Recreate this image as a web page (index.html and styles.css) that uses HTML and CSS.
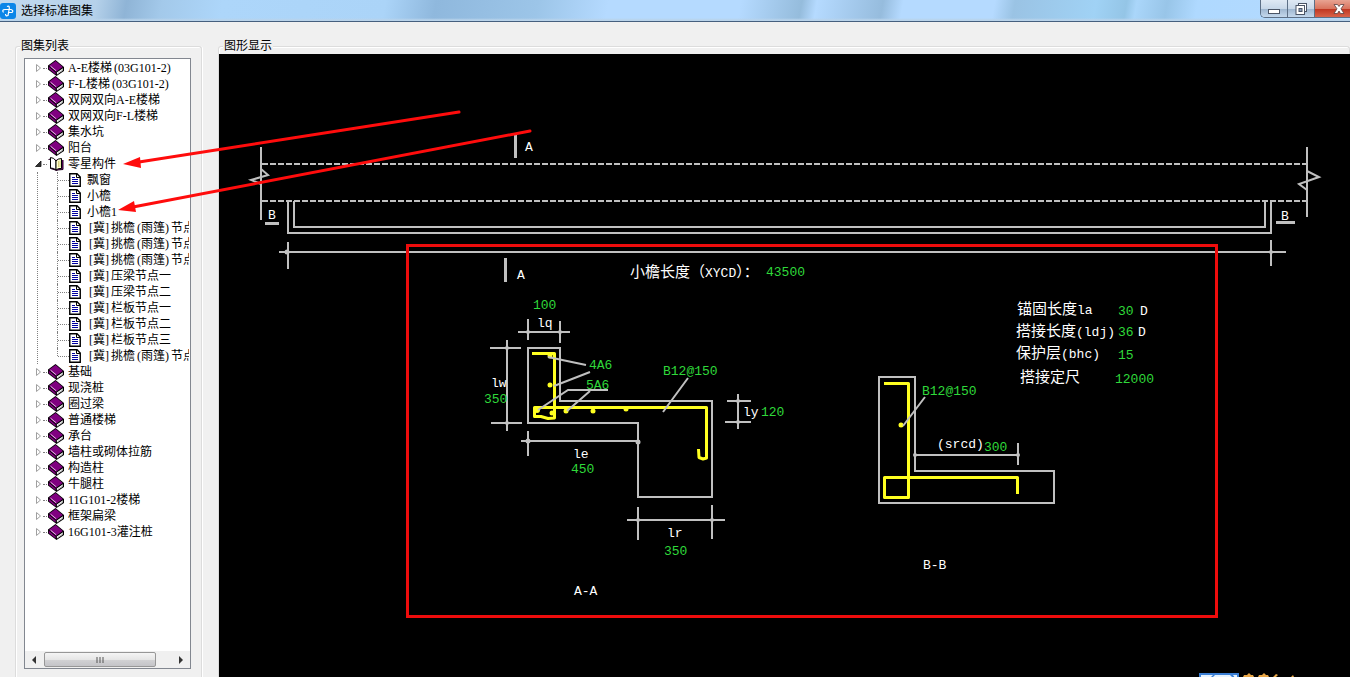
FILE: index.html
```html
<!DOCTYPE html>
<html lang="zh-CN">
<head>
<meta charset="utf-8">
<title>选择标准图集</title>
<link rel="stylesheet" href="styles.css">
</head>
<body>
<svg class="defs" aria-hidden="true">
  <symbol id="book" viewBox="0 0 16 16">
    <path d="M0 5.500 7.500 0 16 7 16 11 8.500 16 0 9.500z" fill="#000"/>
    <path d="M1 5.800 7.600 1 14.800 7 8 11.800z" fill="#800080"/>
    <path d="M.8 6.800 7.600 12.500 7.600 14.600 .8 9z" fill="#800080"/>
    <path d="M8.800 12.600 15 8.300 14.500 10.800 9 14.600z" fill="#fff"/>
    <path d="M2.600 6.200 8.200 10.800" stroke="#e6b8e6" fill="none"/>
    <path d="M9.500 13.600 14.500 10" stroke="#999" stroke-width=".6" fill="none"/>
  </symbol>
  <symbol id="open" viewBox="0 0 16 16">
    <path d="M.5 3.500 2.500 3 2.500 12.500 7.500 14 8.500 15 9.500 14 15 13.500 15 4" fill="#800080" stroke="#1a001a"/>
    <path d="M2.500 1.500Q6 1.500 8 5L8 14Q6 12 2.500 12z" fill="#fff" stroke="#000"/>
    <path d="M8 5Q9.500 2.500 13.500 2.500L13.500 12.500Q10 12 8 14z" fill="#ffffd0" stroke="#000"/>
    <path d="M10.500 5V11M12 4.500V11" stroke="#d8d080"/>
  </symbol>
  <symbol id="doc" viewBox="0 0 12 14">
    <path d="M.75 .75H8L11.250 4V13.250H.75z" fill="#fff" stroke="#000" stroke-width="1.400"/>
    <path d="M7.500 1V4.500H11" fill="none" stroke="#000"/>
    <path d="M3 4.500H6M3 6.500H9M3 8.500H9M3 10.500H9" stroke="#0000a0"/>
  </symbol>
  <symbol id="shut" viewBox="0 0 8 10"><path d="M1.500 1.500 5.500 5 1.500 8.500z" fill="#fff" stroke="#a0a0a0"/></symbol>
  <symbol id="expanded" viewBox="0 0 8 10"><path d="M6 2V7.500H.5z" fill="#333" stroke="#111" stroke-width=".8"/></symbol>
</svg>

<div class="window">
  <header class="titlebar">
    <svg class="app-icon" viewBox="0 0 16 16"><rect width="16" height="16" rx="3" fill="#0b86e8"/><path d="M7 3.500Q9.500 2 9.300 5.500L8 12.500Q5.500 13.500 5.500 11M3.500 9.500Q1.500 6.500 5 6.500H11Q14 7.500 12 9.500H9" fill="none" stroke="#fff" stroke-width="1.200"/></svg>
    <h1 class="title">选择标准图集</h1>
    <div class="controls">
      <button class="control" aria-label="最小化"><svg viewBox="0 0 14 14"><rect x="1.500" y="7.500" width="11" height="4" fill="#fff" stroke="#4b5566"/></svg></button>
      <button class="control" aria-label="还原"><svg viewBox="0 0 14 14"><rect x="4.500" y="1.500" width="8" height="8" fill="#fff" stroke="#4b5566"/><rect x="2" y="3.500" width="8.500" height="9" fill="#fff" stroke="#4b5566"/><rect x="5" y="6.500" width="3" height="3" fill="#8ba0bb" stroke="#4b5566"/></svg></button>
      <button class="control close" aria-label="关闭"><svg viewBox="0 0 14 14"><path d="M2 2.500H5.500L7 4.500 8.500 2.500H12L9 6.800 12 11.500H8.500L7 9 5.500 11.500H2L5 6.800z" fill="#fff" stroke="#5b4040" stroke-width=".8"/></svg></button>
    </div>
  </header>

  <main class="content">
    <section class="group list-group">
      <h2 class="legend">图集列表</h2>
      <div class="tree-box">
        <ul class="tree">
          <li class="row"><button class="toggle" aria-label="展开"><svg><use href="#shut"/></svg></button><svg class="icon"><use href="#book"/></svg>A-E楼梯<span class="half right">(</span>03G101-2<span class="half">)</span></li>
          <li class="row"><button class="toggle" aria-label="展开"><svg><use href="#shut"/></svg></button><svg class="icon"><use href="#book"/></svg>F-L楼梯<span class="half right">(</span>03G101-2<span class="half">)</span></li>
          <li class="row"><button class="toggle" aria-label="展开"><svg><use href="#shut"/></svg></button><svg class="icon"><use href="#book"/></svg>双网双向A-E楼梯</li>
          <li class="row"><button class="toggle" aria-label="展开"><svg><use href="#shut"/></svg></button><svg class="icon"><use href="#book"/></svg>双网双向F-L楼梯</li>
          <li class="row"><button class="toggle" aria-label="展开"><svg><use href="#shut"/></svg></button><svg class="icon"><use href="#book"/></svg>集水坑</li>
          <li class="row"><button class="toggle" aria-label="展开"><svg><use href="#shut"/></svg></button><svg class="icon"><use href="#book"/></svg>阳台</li>
          <li>
            <div class="row"><button class="toggle" aria-label="折叠"><svg><use href="#expanded"/></svg></button><svg class="icon"><use href="#open"/></svg>零星构件</div>
            <ul class="branch">
              <li class="leaf"><svg class="doc"><use href="#doc"/></svg>飘窗</li>
              <li class="leaf"><svg class="doc"><use href="#doc"/></svg>小檐</li>
              <li class="leaf"><svg class="doc"><use href="#doc"/></svg>小檐1</li>
              <li class="leaf"><svg class="doc"><use href="#doc"/></svg><span class="half right">[</span>冀<span class="half">]</span>挑檐<span class="half right">(</span>雨篷<span class="half">)</span>节点</li>
              <li class="leaf"><svg class="doc"><use href="#doc"/></svg><span class="half right">[</span>冀<span class="half">]</span>挑檐<span class="half right">(</span>雨篷<span class="half">)</span>节点</li>
              <li class="leaf"><svg class="doc"><use href="#doc"/></svg><span class="half right">[</span>冀<span class="half">]</span>挑檐<span class="half right">(</span>雨篷<span class="half">)</span>节点</li>
              <li class="leaf"><svg class="doc"><use href="#doc"/></svg><span class="half right">[</span>冀<span class="half">]</span>压梁节点一</li>
              <li class="leaf"><svg class="doc"><use href="#doc"/></svg><span class="half right">[</span>冀<span class="half">]</span>压梁节点二</li>
              <li class="leaf"><svg class="doc"><use href="#doc"/></svg><span class="half right">[</span>冀<span class="half">]</span>栏板节点一</li>
              <li class="leaf"><svg class="doc"><use href="#doc"/></svg><span class="half right">[</span>冀<span class="half">]</span>栏板节点二</li>
              <li class="leaf"><svg class="doc"><use href="#doc"/></svg><span class="half right">[</span>冀<span class="half">]</span>栏板节点三</li>
              <li class="leaf"><svg class="doc"><use href="#doc"/></svg><span class="half right">[</span>冀<span class="half">]</span>挑檐<span class="half right">(</span>雨篷<span class="half">)</span>节点</li>
            </ul>
          </li>
          <li class="row"><button class="toggle" aria-label="展开"><svg><use href="#shut"/></svg></button><svg class="icon"><use href="#book"/></svg>基础</li>
          <li class="row"><button class="toggle" aria-label="展开"><svg><use href="#shut"/></svg></button><svg class="icon"><use href="#book"/></svg>现浇桩</li>
          <li class="row"><button class="toggle" aria-label="展开"><svg><use href="#shut"/></svg></button><svg class="icon"><use href="#book"/></svg>圈过梁</li>
          <li class="row"><button class="toggle" aria-label="展开"><svg><use href="#shut"/></svg></button><svg class="icon"><use href="#book"/></svg>普通楼梯</li>
          <li class="row"><button class="toggle" aria-label="展开"><svg><use href="#shut"/></svg></button><svg class="icon"><use href="#book"/></svg>承台</li>
          <li class="row"><button class="toggle" aria-label="展开"><svg><use href="#shut"/></svg></button><svg class="icon"><use href="#book"/></svg>墙柱或砌体拉筋</li>
          <li class="row"><button class="toggle" aria-label="展开"><svg><use href="#shut"/></svg></button><svg class="icon"><use href="#book"/></svg>构造柱</li>
          <li class="row"><button class="toggle" aria-label="展开"><svg><use href="#shut"/></svg></button><svg class="icon"><use href="#book"/></svg>牛腿柱</li>
          <li class="row"><button class="toggle" aria-label="展开"><svg><use href="#shut"/></svg></button><svg class="icon"><use href="#book"/></svg>11G101-2楼梯</li>
          <li class="row"><button class="toggle" aria-label="展开"><svg><use href="#shut"/></svg></button><svg class="icon"><use href="#book"/></svg>框架扁梁</li>
          <li class="row"><button class="toggle" aria-label="展开"><svg><use href="#shut"/></svg></button><svg class="icon"><use href="#book"/></svg>16G101-3灌注桩</li>
        </ul>
        <div class="scrollbar">
          <button class="scroll-arrow" aria-label="向左滚动"><svg viewBox="0 0 8 8"><path d="M6 0V8L2 4z" fill="#333"/></svg></button>
          <div class="track"><div class="thumb"><svg viewBox="0 0 8 6"><path d="M1 0V6M4 0V6M7 0V6" stroke="#555"/></svg></div></div>
          <button class="scroll-arrow" aria-label="向右滚动"><svg viewBox="0 0 8 8"><path d="M2 0V8L6 4z" fill="#333"/></svg></button>
        </div>
      </div>
    </section>

    <section class="group view-group">
      <h2 class="legend">图形显示</h2>
      <div class="canvas">
        <svg class="drawing" viewBox="219 54 1131 623" preserveAspectRatio="xMinYMin meet" role="img" aria-label="小檐1 节点图">
          <g class="line">
            <path d="M262 164H1306M262 201H1306" stroke-dasharray="6 2"/>
            <path d="M261 147V220M261 169 268 175 251 180 261 184"/>
            <path d="M1307 147V217M1307 171 1319 177 1299 184 1307 190"/>
            <path d="M288 201V233H1271V201M294 201V227H1265V201"/>
            <path d="M279 252H1286M288 242V269M1271 240V266"/>
            <path class="mark" d="M515.500 135V158M505.500 258V282M265 223.500H279M1276 222.500H1295"/>
            <path d="M518 332H570M528 319V340M560 321V343"/>
            <path d="M507 340V431M490 348H521M491 423H522"/>
            <path d="M528 348H560V401H712V497H638V423H528z"/>
            <path d="M521 441H640M528 431V456"/>
            <path d="M627 520H725M638 507V540M712 505V539"/>
            <path d="M738 394V429M727 401H751M725 422H751"/>
            <path d="M879 377H915V471H1054V503H879z"/>
            <path d="M914 455H1019M1018 443V465"/>
          </g>
          <g class="node">
            <circle cx="287" cy="252" r="2.500"/><circle cx="1271" cy="252" r="2"/>
            <circle cx="507" cy="348" r="2"/><circle cx="507" cy="423" r="2"/>
            <circle cx="528" cy="332" r="2"/><circle cx="560" cy="332" r="2"/>
            <circle cx="528" cy="441" r="2.500"/><circle cx="638" cy="442" r="2.500"/>
            <circle cx="638" cy="520" r="2"/><circle cx="712" cy="520" r="2"/>
            <circle cx="738" cy="401" r="2"/><circle cx="738" cy="422" r="2"/>
            <circle cx="915" cy="455" r="2"/><circle cx="1018" cy="455" r="2"/>
          </g>
          <g class="bar">
            <path d="M532 353.500H554.500V418L548 418.500 541 416.500H534.500V407.500H706.500V458L703 459 699 457.500 698.500 449"/>
            <path d="M884 383.500H908.500V497.500H884.500V477.500H1017.500V494"/>
          </g>
          <g class="dot">
            <circle cx="550" cy="356" r="2.500"/><circle cx="550" cy="385" r="2.500"/><circle cx="552" cy="413" r="2.500"/><circle cx="537" cy="410" r="3"/>
            <circle cx="566" cy="411" r="2.500"/><circle cx="593" cy="411" r="2.500"/><circle cx="626" cy="409" r="2.500"/><circle cx="901" cy="425" r="2.500"/>
          </g>
          <path class="leader" d="M548 357 586 365M554 386 590 372M608 390H568L538 410M590 391 567 411M688 378 663 412M925 397 903 426"/>
          <g class="label">
            <text x="525" y="151">A</text><text x="517" y="279">A</text>
            <text x="268" y="219">B</text><text x="1281" y="220">B</text>
            <text x="537" y="327">lq</text><text x="491" y="387">lw</text><text x="573" y="458">le</text>
            <text x="667" y="537">lr</text><text x="743" y="416">ly</text>
            <text x="574" y="595">A-A</text><text x="923" y="569">B-B</text><text x="937" y="448">(srcd)</text>
            <text x="630" y="277"><tspan class="han">小檐长度（</tspan>XYCD<tspan class="han">）：</tspan></text>
            <text x="1017" y="314"><tspan class="han">锚固长度</tspan>la</text>
            <text x="1016" y="336"><tspan class="han">搭接长度</tspan>(ldj)</text>
            <text x="1016" y="358"><tspan class="han">保护层</tspan>(bhc)</text>
            <text x="1020" y="382"><tspan class="han">搭接定尺</tspan></text>
            <text x="1140" y="315">D</text><text x="1138" y="336">D</text>
          </g>
          <g class="label value">
            <text x="589" y="369">4A6</text><text x="586" y="389">5A6</text>
            <text x="663" y="375">B12@150</text><text x="922" y="395">B12@150</text>
            <text x="766" y="276">43500</text><text x="533" y="309">100</text><text x="484" y="403">350</text>
            <text x="571" y="473">450</text><text x="664" y="555">350</text><text x="761" y="416">120</text>
            <text x="984" y="451">300</text><text x="1118" y="315">30</text><text x="1118" y="336">36</text>
            <text x="1118" y="359">15</text><text x="1115" y="383">12000</text>
          </g>
          <rect class="frame" x="407.500" y="245.500" width="809" height="371"/>
          <g>
            <rect x="1199" y="673" width="40" height="6" fill="#3b7fd4"/>
            <path d="M1201 675H1213L1210 678H1201zM1215 675H1230L1233 678H1212zM1233 675H1237V678H1235z" fill="#e6f3ff"/>
            <path d="M1243 677 1244 675H1247L1249 673 1251 675H1253L1254 677zM1258 677 1259 675H1262L1264 673 1266 675H1268L1269 677zM1273 677 1276 674 1278 675 1276 677zM1291 677 1293 675 1294 677z" fill="#e8a545"/>
          </g>
        </svg>
      </div>
    </section>
  </main>

  <svg class="arrows" viewBox="0 0 1350 677" preserveAspectRatio="xMinYMin meet" aria-hidden="true">
    <path d="M459 112 139 162M530 131 133 207" fill="none" stroke="#ff0c0c" stroke-width="3" stroke-linecap="round"/>
    <path d="M123 164 140 157 141 168zM118 210 134 201 136 212z" fill="#ff0c0c"/>
  </svg>
</div>
</body>
</html>
```
FILE: styles.css
```css
* { box-sizing: border-box; }

body {
  margin: 0;
  font: 12px/16px "Liberation Serif", "Noto Sans CJK SC", sans-serif;
  color: #000;
  background: #f0f0f0;
}

button { padding: 0; border: 0; background: none; font: inherit; }
ul { margin: 0; padding: 0; list-style: none; }
.defs { position: absolute; width: 0; height: 0; }

.window {
  position: relative;
  display: flex;
  flex-direction: column;
  height: 100vh;
  overflow: hidden;
}

.titlebar {
  display: flex;
  align-items: flex-start;
  height: 22px;
  border-bottom: 1px solid #46607f;
  background:
    linear-gradient(transparent 18px, #b9d3ea 20px),
    linear-gradient(100deg, #c3daee 0, #b5d1ea 95px, #8fb4d6 125px, #a3c9ea 160px, #add6fa 220px,
      #abd4f8 380px, #8fb8dd 430px, #9cc5e8 530px, #b5daff 600px, #b5daff 730px,
      #95bcdc 790px, #b5daff 805px, #96bcdd 870px, #b5daff 890px, #b5daff 980px,
      #9ac3e4 1000px, #a0d2f5 1080px, #94c5e6 1110px, #aad6fa 1120px, #98c5e8 1150px,
      #afd9ff 1180px, #b5daff 100%);
}
.app-icon { width: 16px; height: 16px; margin-top: 3px; }
.title { flex: 1; margin: 3px 5px 0; font: inherit; }

.controls {
  display: flex;
  height: 18px;
  border: 1px solid #5c6f86;
  border-width: 0 0 1px 1px;
  border-radius: 0 0 0 5px;
  overflow: hidden;
}
.control {
  display: flex;
  justify-content: center;
  align-items: center;
  width: 27px;
  border-right: 1px solid #5c6f86;
  background: linear-gradient(#dfe9f4, #c8d8e9 50%, #9db5cf 52%, #c4d8ec);
}
.control svg { width: 14px; height: 14px; }
.close {
  width: 35px;
  padding-left: 12px;
  border-right: 0;
  background: linear-gradient(#e8a392, #d9755f 50%, #bf3520 52%, #d8634a);
}

.content {
  flex: 1;
  display: flex;
  gap: 16px;
  min-height: 0;
  padding: 16px 0 0 15px;
}
.group { position: relative; display: flex; flex-direction: column; min-width: 0; min-height: 0; }
.group::before {
  content: "";
  position: absolute;
  inset: 8px 0 0;
  border: 1px solid #dcdcdc;
  border-bottom: 0;
  border-radius: 3px 3px 0 0;
  box-shadow: inset 1px 1px #fff, 1px 0 #fff;
}
.legend {
  position: relative;
  align-self: flex-start;
  margin: 0 0 0 5px;
  padding: 0 1px;
  font: inherit;
  background: #f0f0f0;
}
.list-group { flex: 0 0 187px; }
.view-group { flex: 1; }

.tree-box {
  position: relative;
  flex: 1;
  display: flex;
  flex-direction: column;
  margin: 4px 11px 8px 9px;
  border: 1px solid #828790;
  background: #fff;
  overflow: hidden;
}
.tree { flex: 1; margin-right: 1px; padding: 1px 0 0 10px; overflow: hidden; }
.row, .leaf { display: flex; align-items: center; height: 16px; white-space: nowrap; }
.toggle { display: flex; flex: none; width: 13px; height: 10px; }
.toggle svg { width: 8px; height: 10px; }
.icon { flex: none; width: 16px; height: 16px; margin-right: 4px; }
.toggle::after {
  content: "";
  flex: none;
  align-self: center;
  width: 4px;
  border-top: 1px dotted #808080;
}
.half { width: 6px; flex: none; }
.right { text-align: right; }

.branch { margin-left: 2px; padding-left: 19px; border-left: 1px dotted #808080; overflow: hidden; }
.leaf { position: relative; border-left: 1px dotted #808080; }
.leaf:last-child { border-left-color: transparent; }
.leaf:last-child::after {
  content: "";
  position: absolute;
  left: -1px;
  top: 0;
  height: 8px;
  border-left: 1px dotted #808080;
}
.leaf::before { content: ""; flex: none; width: 11px; border-top: 1px dotted #808080; }
.doc { flex: none; width: 12px; height: 14px; margin-right: 6px; }

.scrollbar { display: flex; height: 17px; background: #f0f0f0; }
.scroll-arrow { display: flex; align-items: center; justify-content: center; width: 18px; }
.scroll-arrow svg { width: 8px; height: 8px; }
.track { flex: 1; padding: 1px; }
.thumb {
  display: flex;
  align-items: center;
  justify-content: center;
  width: 88%;
  height: 15px;
  border: 1px solid #979797;
  border-radius: 2px;
  background: linear-gradient(#f5f5f5, #e6e6e6 50%, #d2d2d4 52%, #c4c4c8);
}
.thumb svg { width: 8px; height: 6px; }

.canvas { position: relative; flex: 1; min-height: 0; margin-left: 1px; background: #000; }
.drawing { display: block; width: 100%; height: 100%; }
.line { fill: none; stroke: #c0c0c0; stroke-width: 2; }
.mark { stroke-width: 3; }
.node { fill: #c0c0c0; }
.bar { fill: none; stroke: #ffff20; stroke-width: 3; stroke-linejoin: round; }
.dot { fill: #ffff20; }
.leader { fill: none; stroke: #c0c0c0; stroke-width: 2; }
.label { font: 13px "Liberation Mono", "Noto Sans CJK SC", monospace; fill: #fff; }
.han { font: 15px "Noto Sans CJK SC", sans-serif; }
.value { fill: #2fd83a; }
.frame { fill: none; stroke: #ee0c0c; stroke-width: 3; }

.arrows { position: absolute; inset: 0; width: 100%; height: 100%; pointer-events: none; }
```
